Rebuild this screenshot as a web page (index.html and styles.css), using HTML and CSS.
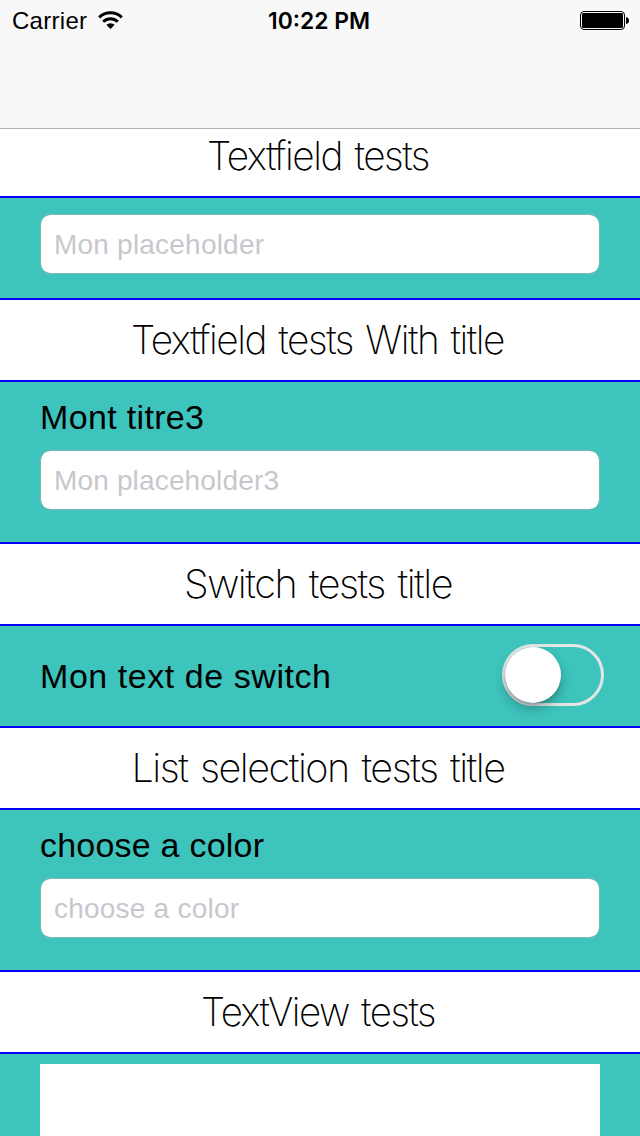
FILE: index.html
```html
<!DOCTYPE html>
<html lang="fr"><head><meta charset="utf-8"><title>Form tests</title><link rel="stylesheet" href="styles.css"></head>
<body>
<header class="navbar"><div class="status">
<div class="carrier"><svg class="t" width="76" height="28"><text x="0" y="21" textLength="75">Carrier</text></svg>
<svg class="wifi" width="25" height="19" viewBox="0 0 25 19"><g fill="none" stroke="#000" stroke-width="3"><path d="M1.2 6.3a16.5 16.5 0 0 1 22.6 0"/><path d="M5.2 10.8a10.4 10.4 0 0 1 14.6 0"/></g><path d="M12.5 18l-4.2-4.2a6.4 6.4 0 0 1 8.4 0z"/></svg></div>
<svg class="t clock" width="104" height="28"><text x="-1" y="21" textLength="102" lengthAdjust="spacingAndGlyphs">10:22 PM</text></svg>
<svg class="battery" width="49" height="20" viewBox="0 0 49 20"><rect x=".5" y=".5" width="44" height="18" rx="3.5" fill="none" stroke="#000"/><rect x="2" y="2" width="41" height="15" rx="1.5"/><path d="M46 6q3 .5 3 3.500t-3 3.500z"/></svg>
</div></header>
<main>
<h2 class="heading first"><svg width="640" height="66"><text x="207" y="41" textLength="222" lengthAdjust="spacingAndGlyphs">Textfield tests</text></svg></h2>
<section class="panel short"><div class="field"><svg width="540" height="58"><text x="13" y="39" textLength="210">Mon placeholder</text></svg></div></section>
<h2 class="heading"><svg width="640" height="80"><text x="131" y="54" textLength="373" lengthAdjust="spacingAndGlyphs">Textfield tests With title</text></svg></h2>
<section class="panel tall"><svg class="label" width="540" height="46"><text x="0" y="31" textLength="164">Mont titre3</text></svg><div class="field"><svg width="540" height="58"><text x="13" y="39" textLength="225">Mon placeholder3</text></svg></div></section>
<h2 class="heading"><svg width="640" height="80"><text x="184" y="54" textLength="268" lengthAdjust="spacingAndGlyphs">Switch tests title</text></svg></h2>
<section class="panel short switch-row"><svg class="label" width="400" height="56"><text x="0" y="44" textLength="291">Mon text de switch</text></svg><div class="switch"><div class="knob"></div></div></section>
<h2 class="heading"><svg width="640" height="80"><text x="131.500" y="54" textLength="373" lengthAdjust="spacingAndGlyphs">List selection tests title</text></svg></h2>
<section class="panel tall"><svg class="label" width="540" height="46"><text x="0" y="31" textLength="224">choose a color</text></svg><div class="field"><svg width="540" height="58"><text x="13" y="39" textLength="185">choose a color</text></svg></div></section>
<h2 class="heading"><svg width="640" height="80"><text x="201" y="54" textLength="234" lengthAdjust="spacingAndGlyphs">TextView tests</text></svg></h2>
<section class="panel last"><div class="textview"></div></section>
</main></body></html>
```
FILE: styles.css
```css
*{box-sizing:border-box}
body{margin:0;width:640px;height:1136px;overflow:hidden;font-family:"Liberation Sans",Arial,sans-serif;background:#fff}
svg{display:block}
.navbar{height:129px;background:linear-gradient(#f8f8f8 60%,#f6f7f8);border-bottom:1px solid #b2b2b2}
.status{height:40px;display:grid;grid-template-columns:1fr 104px 1fr;align-items:start;padding:8px 11px 0 12px}
.t{font-size:24px}
.carrier{display:flex;gap:10px}
.wifi{margin-top:3px}
.clock{font-family:Inter,"Liberation Sans",sans-serif;font-size:23px;font-weight:600;overflow:visible}
.battery{justify-self:end;margin-top:3px}
.heading{margin:0;height:80px;background:#fff;font-family:Inter,"Open Sans",sans-serif;font-weight:200;font-size:39.5px;letter-spacing:-1.5px;word-spacing:3px;font-variant-ligatures:none}
.first{height:67px}
.panel{background:#3dc4bd;border:solid #00f;border-width:2px 0;padding:16px 40px 0}
.short{height:104px}
.tall{height:164px}
.field{height:60px;background:#fff;background-clip:padding-box;border:1px solid #7fb5b2;border-radius:10px;font-size:28px}
.field text{fill:#c7c7cd}
.label{font-size:34px;margin-bottom:6px}
.switch-row{display:flex;justify-content:space-between;padding-top:18px;padding-right:36px}
.switch{width:102px;height:62px;border:3px solid #e5e5e5;border-radius:31px}
.knob{width:56px;height:56px;border-radius:50%;background:#fff;box-shadow:0 6px 12px #0004,0 2px 2px #0002}
.last{height:90px;padding-top:10px}
.textview{height:80px;background:#fff}
```
